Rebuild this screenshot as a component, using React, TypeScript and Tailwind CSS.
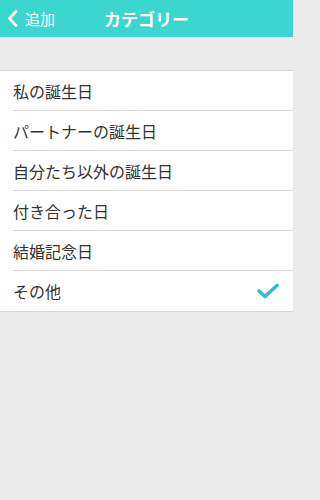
import React from "react";

const items = [
  "私の誕生日",
  "パートナーの誕生日",
  "自分たち以外の誕生日",
  "付き合った日",
  "結婚記念日",
  "その他",
];

export default function App() {
  return (
    <div className="min-h-screen bg-[#ebebec]">
      <div
        className="w-[293px] h-[500px] bg-[#ebebec] flex flex-col"
        style={{ fontFamily: '"Noto Sans CJK JP", "Noto Sans", sans-serif' }}
      >
        <div className="h-[37px] bg-[#3dd5cf] flex items-center relative">
          <div className="flex items-center pl-[7px] text-white">
            <svg width="11" height="17" viewBox="0 0 11 17">
              <path d="M9 1.5 L2.5 8.5 L9 15.5" fill="none" stroke="white" strokeWidth="2.6" strokeLinecap="round" strokeLinejoin="round" />
            </svg>
            <span className="ml-[7px] text-[15px] leading-none">追加</span>
          </div>
          <div className="absolute left-0 right-0 top-0 bottom-0 flex items-center justify-center pointer-events-none">
            <span className="text-white text-[17px] font-bold leading-none">カテゴリー</span>
          </div>
        </div>
        <div className="h-[33px]" />
        <div className="bg-white border-t border-b border-[#d6d6d6]">
          {items.map((t, i) => (
            <div key={i} className="pl-[13px]">
              <div
                className={`h-[40px] flex items-center justify-between pr-[14px] ${
                  i < items.length - 1 ? "border-b border-[#dadada]" : ""
                }`}
              >
                <span className="text-[16px] text-[#333] leading-none">{t}</span>
                {i === items.length - 1 && (
                  <svg width="22" height="16" viewBox="0 0 22 16">
                    <path d="M2 8 L8 13.5 L20 2.5" fill="none" stroke="#2bbfc7" strokeWidth="3.6" strokeLinecap="round" strokeLinejoin="round" />
                  </svg>
                )}
              </div>
            </div>
          ))}
        </div>
      </div>
    </div>
  );
}
